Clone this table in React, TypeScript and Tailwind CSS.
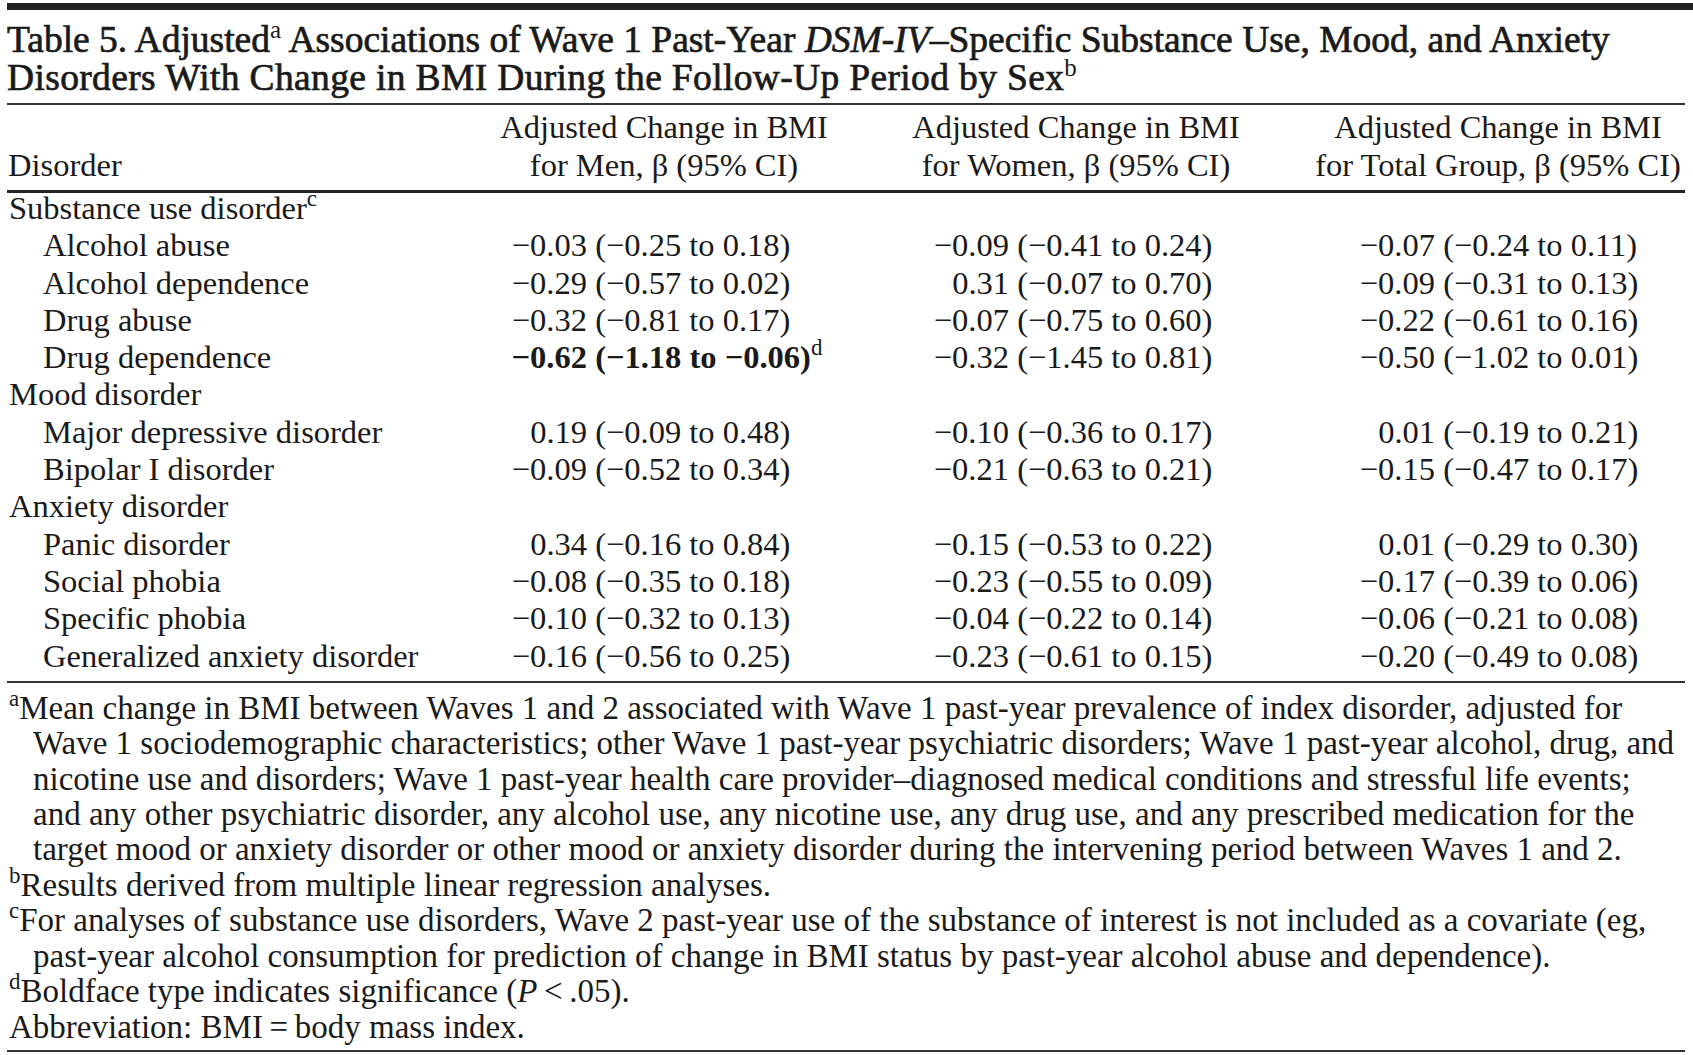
import React from "react";

type Val = { est: string; ci: string; bold?: boolean; sup?: string };
type Row = { label: string; vals: [Val, Val, Val] };
type Section = { label: string; sup?: string; rows: Row[] };

const v = (est: string, ci: string, bold?: boolean, sup?: string): Val => ({ est, ci, bold, sup });

const sections: Section[] = [
  {
    label: "Substance use disorder",
    sup: "c",
    rows: [
      { label: "Alcohol abuse", vals: [v("−0.03", "(−0.25 to 0.18)"), v("−0.09", "(−0.41 to 0.24)"), v("−0.07", "(−0.24 to 0.11)")] },
      { label: "Alcohol dependence", vals: [v("−0.29", "(−0.57 to 0.02)"), v("0.31", "(−0.07 to 0.70)"), v("−0.09", "(−0.31 to 0.13)")] },
      { label: "Drug abuse", vals: [v("−0.32", "(−0.81 to 0.17)"), v("−0.07", "(−0.75 to 0.60)"), v("−0.22", "(−0.61 to 0.16)")] },
      { label: "Drug dependence", vals: [v("−0.62", "(−1.18 to −0.06)", true, "d"), v("−0.32", "(−1.45 to 0.81)"), v("−0.50", "(−1.02 to 0.01)")] },
    ],
  },
  {
    label: "Mood disorder",
    rows: [
      { label: "Major depressive disorder", vals: [v("0.19", "(−0.09 to 0.48)"), v("−0.10", "(−0.36 to 0.17)"), v("0.01", "(−0.19 to 0.21)")] },
      { label: "Bipolar I disorder", vals: [v("−0.09", "(−0.52 to 0.34)"), v("−0.21", "(−0.63 to 0.21)"), v("−0.15", "(−0.47 to 0.17)")] },
    ],
  },
  {
    label: "Anxiety disorder",
    rows: [
      { label: "Panic disorder", vals: [v("0.34", "(−0.16 to 0.84)"), v("−0.15", "(−0.53 to 0.22)"), v("0.01", "(−0.29 to 0.30)")] },
      { label: "Social phobia", vals: [v("−0.08", "(−0.35 to 0.18)"), v("−0.23", "(−0.55 to 0.09)"), v("−0.17", "(−0.39 to 0.06)")] },
      { label: "Specific phobia", vals: [v("−0.10", "(−0.32 to 0.13)"), v("−0.04", "(−0.22 to 0.14)"), v("−0.06", "(−0.21 to 0.08)")] },
      { label: "Generalized anxiety disorder", vals: [v("−0.16", "(−0.56 to 0.25)"), v("−0.23", "(−0.61 to 0.15)"), v("−0.20", "(−0.49 to 0.08)")] },
    ],
  },
];

const padClasses = ["pl-[19px]", "pl-[89px]", "pl-[43px]"];
const gridCols = "grid grid-cols-[481px_352px_472px_372px]";

function Sup({ children }: { children: React.ReactNode }) {
  return <sup className="text-[23px] top-[-13px] font-normal tracking-normal [-webkit-text-stroke:0px]">{children}</sup>;
}

function TitleSup({ children }: { children: React.ReactNode }) {
  return <sup className="text-[25px] top-[-14px] font-normal tracking-normal [-webkit-text-stroke:0px]">{children}</sup>;
}

function ValueCell({ val, idx }: { val: Val; idx: number }) {
  return (
    <div className={`flex whitespace-pre ${padClasses[idx]} ${val.bold ? "font-bold" : ""}`}>
      <span className="w-[80px] text-right">{val.est}</span>
      <span>
        {" "}
        {val.ci}
        {val.sup ? <Sup>{val.sup}</Sup> : null}
      </span>
    </div>
  );
}

function HeaderCell({ l1, l2 }: { l1: string; l2: string }) {
  return (
    <div className="flex flex-col items-center whitespace-nowrap">
      <div>{l1}</div>
      <div>{l2}</div>
    </div>
  );
}

export default function App() {
  return (
    <div className="w-[1693px] h-[1055px] overflow-hidden bg-white text-[#1a1a1a] font-['Liberation_Serif',serif]">
      <div className="pt-[3px] pl-[7px]">
        <div className="h-[7px] bg-[#222]" />
        <div className="w-[1678px]">
          {/* Title */}
          <div className="mt-[11px] text-[37.5px] leading-[38px] whitespace-nowrap [-webkit-text-stroke:0.7px_#1a1a1a]">
            <div>
              Table 5. Adjusted<TitleSup>a</TitleSup> Associations of Wave 1 Past-Year <i>DSM-IV</i>–Specific Substance Use, Mood, and Anxiety
            </div>
            <div className="tracking-[0.35px]">
              Disorders With Change in BMI During the Follow-Up Period by Sex<TitleSup>b</TitleSup>
            </div>
          </div>
          <div className="mt-[6px] h-[2px] bg-[#333]" />

          {/* Header */}
          <div className={`${gridCols} mt-[3px] text-[32.5px] leading-[38px]`}>
            <div className="flex flex-col">
              <div>&nbsp;</div>
              <div className="pl-[1px]">Disorder</div>
            </div>
            <HeaderCell l1="Adjusted Change in BMI" l2="for Men, β (95% CI)" />
            <HeaderCell l1="Adjusted Change in BMI" l2="for Women, β (95% CI)" />
            <HeaderCell l1="Adjusted Change in BMI" l2="for Total Group, β (95% CI)" />
          </div>
          <div className="mt-[6px] h-[3px] bg-[#222]" />

          {/* Body */}
          <div className="mt-[-3px] text-[32.5px] leading-[37.3px]">
            {sections.map((s) => (
              <React.Fragment key={s.label}>
                <div className={gridCols}>
                  <div className="pl-[2px] whitespace-nowrap">
                    {s.label}
                    {s.sup ? <Sup>{s.sup}</Sup> : null}
                  </div>
                  <div />
                  <div />
                  <div />
                </div>
                {s.rows.map((r) => (
                  <div key={r.label} className={gridCols}>
                    <div className="pl-[36px] whitespace-nowrap">{r.label}</div>
                    {r.vals.map((val, i) => (
                      <ValueCell key={i} val={val} idx={i} />
                    ))}
                  </div>
                ))}
              </React.Fragment>
            ))}
          </div>
          <div className="mt-[6px] h-[2px] bg-[#333]" />

          {/* Footnotes */}
          <div className="mt-[8px] text-[33px] leading-[35.4px] whitespace-nowrap">
            <div className="pl-[26px] -indent-[24px]">
              <Sup>a</Sup>Mean change in BMI between Waves 1 and 2 associated with Wave 1 past-year prevalence of index disorder, adjusted for
              <br />
              Wave 1 sociodemographic characteristics; other Wave 1 past-year psychiatric disorders; Wave 1 past-year alcohol, drug, and
              <br />
              nicotine use and disorders; Wave 1 past-year health care provider–diagnosed medical conditions and stressful life events;
              <br />
              and any other psychiatric disorder, any alcohol use, any nicotine use, any drug use, and any prescribed medication for the
              <br />
              target mood or anxiety disorder or other mood or anxiety disorder during the intervening period between Waves 1 and 2.
            </div>
            <div className="pl-[26px] -indent-[24px]">
              <Sup>b</Sup>Results derived from multiple linear regression analyses.
            </div>
            <div className="pl-[26px] -indent-[24px]">
              <Sup>c</Sup>For analyses of substance use disorders, Wave 2 past-year use of the substance of interest is not included as a covariate (eg,
              <br />
              past-year alcohol consumption for prediction of change in BMI status by past-year alcohol abuse and dependence).
            </div>
            <div className="pl-[26px] -indent-[24px]">
              <Sup>d</Sup>Boldface type indicates significance (<i>P</i>{"\u2009<\u2009"}.05).
            </div>
            <div className="pl-[2px]">Abbreviation: BMI{"\u2009=\u2009"}body mass index.</div>
          </div>
          <div className="mt-[5px] h-[2px] bg-[#333]" />
        </div>
      </div>
    </div>
  );
}
